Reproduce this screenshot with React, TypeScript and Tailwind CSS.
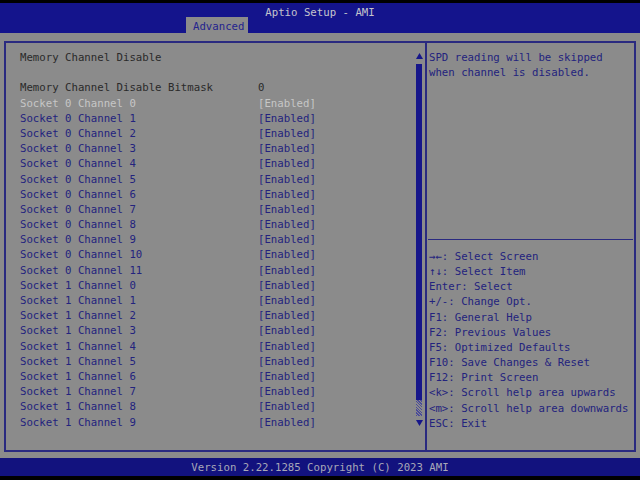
import React from "react";

const channels: string[] = [];
for (let s = 0; s < 2; s++) {
  const count = s === 0 ? 12 : 10;
  for (let c = 0; c < count; c++) channels.push(`Socket ${s} Channel ${c}`);
}

const helpKeys = [
  "→←: Select Screen",
  "↑↓: Select Item",
  "Enter: Select",
  "+/-: Change Opt.",
  "F1: General Help",
  "F2: Previous Values",
  "F5: Optimized Defaults",
  "F10: Save Changes & Reset",
  "F12: Print Screen",
  "<k>: Scroll help area upwards",
  "<m>: Scroll help area downwards",
  "ESC: Exit",
];

function Row({ label, value, className }: { label: string; value?: string; className: string }) {
  return (
    <div className={`flex h-[15.2px] items-center whitespace-pre ${className}`}>
      <span className="w-[238px] shrink-0">{label}</span>
      <span>{value}</span>
    </div>
  );
}

export default function App() {
  return (
    <div
      className="flex h-[480px] w-[640px] flex-col overflow-hidden bg-[#8b8b8b] text-[10.7px] leading-[15.2px]"
      style={{ fontFamily: '"DejaVu Sans Mono", "Liberation Mono", monospace' }}
    >
      {/* top black edge */}
      <div className="h-[3px] bg-black" />

      {/* Header */}
      <div className="relative flex h-[30px] flex-col items-center bg-[#14148c]">
        <div className="mt-[2px] text-[#c4c4cc]">Aptio Setup - AMI</div>
        <div className="absolute bottom-0 left-[186px] flex h-[16px] w-[62px] items-center bg-[#8b8b8b] pl-[7px] pt-[3px] text-[#24248e]">
          Advanced
        </div>
      </div>

      <div className="h-[8px]" />

      {/* Main box */}
      <div className="mx-[4px] flex h-[411px] border-2 border-[#2a2a80]">
        {/* Left panel */}
        <div className="flex w-[410px] flex-col pl-[14px] pt-[7px]">
          <Row label="Memory Channel Disable" className="text-[#2a2a2a]" />
          <Row label="" className="" />
          <Row label="Memory Channel Disable Bitmask" value="0" className="text-[#2a2a2a]" />
          {channels.map((ch, i) => (
            <Row
              key={ch}
              label={ch}
              value="[Enabled]"
              className={i === 0 ? "text-[#c6c6c6]" : "text-[#23237e]"}
            />
          ))}
        </div>

        {/* Scrollbar */}
        <div className="flex w-[9px] flex-col items-start pt-[9px] pb-[23px]">
          <svg width="7" height="8" viewBox="0 0 7 8" className="shrink-0">
            <polygon points="3.5,1 7,7 0,7" fill="#16168a" />
          </svg>
          <div className="mt-[4px] w-[6px] flex-1 bg-[#16168a]" />
          <div
            className="w-[6px] h-[16px] bg-[#8b8b8b]"
            style={{
              backgroundImage:
                "repeating-linear-gradient(45deg, #4a4a9a 0 1px, transparent 1px 2px)",
            }}
          />
          <svg width="7" height="8" viewBox="0 0 7 8" className="mt-[3px] shrink-0">
            <polygon points="0,1 7,1 3.5,7" fill="#16168a" />
          </svg>
        </div>

        {/* Right panel */}
        <div className="flex flex-1 flex-col border-l-2 border-[#2a2a80] pt-[7px]">
          <div className="pl-[2px] text-[#23237e]">
            <div>SPD reading will be skipped</div>
            <div>when channel is disabled.</div>
          </div>
          <div className="flex-1" />
          <div className="mx-[1px] h-px bg-[#2a2a80]" />
          <div className="pl-[2px] pt-[9px] pb-[19px] text-[#23237e]">
            {helpKeys.map((k) => (
              <div key={k} className="h-[15.2px] whitespace-pre">
                {k}
              </div>
            ))}
          </div>
        </div>
      </div>

      <div className="h-[6px]" />

      {/* Footer */}
      <div className="flex h-[18px] items-center justify-center bg-[#12127e] pt-[1px] text-[#a8a8b8]">
        Version 2.22.1285 Copyright (C) 2023 AMI
      </div>
      <div className="flex-1 bg-black" />
    </div>
  );
}
